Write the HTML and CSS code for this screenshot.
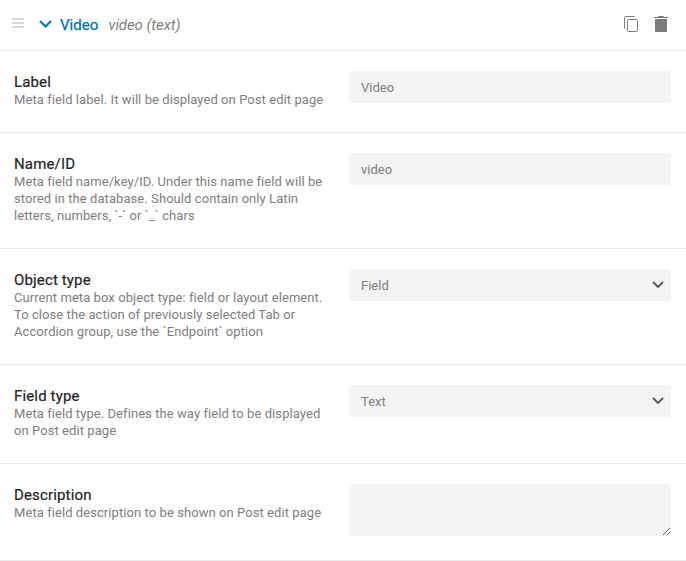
FILE: index.html
```html
<!DOCTYPE html>
<html lang="en">
<head>
<meta charset="utf-8">
<title>Video</title>
<link rel="stylesheet" href="styles.css">
</head>
<body>
<header class="head">
  <svg class="drag" width="12" height="10" viewBox="0 0 12 10"><path d="M0 0h12v2H0zM0 4h12v2H0zM0 8h12v2H0z" fill="#d9d9d9"/></svg>
  <svg class="chev" width="13" height="8" viewBox="0 0 13 8"><path d="M1 1l5.500 5.500L12 1" fill="none" stroke="#0073aa" stroke-width="2"/></svg>
  <span class="title">Video</span>
  <span class="sub">video (text)</span>
  <span class="actions">
    <svg width="14" height="16" viewBox="0 0 14 16"><path fill="none" stroke="#7b7b7b" d="M10.500.5H1.500q-1 0-1 1V12.500"/><rect x="3.500" y="3.500" width="10" height="12" rx="1" fill="none" stroke="#7b7b7b"/></svg>
    <svg width="14" height="16" viewBox="0 0 14 16"><path fill="#7b7b7b" d="M4.500 0h5l.5 1h4v1H0V1h4zM1 3h12v12q0 1-1 1H2q-1 0-1-1z"/></svg>
  </span>
</header>
<section class="row">
  <div class="info"><h3>Label</h3><p>Meta field label. It will be displayed on Post edit page</p></div>
  <div class="control"><input class="field" type="text" value="Video"></div>
</section>
<section class="row">
  <div class="info"><h3>Name/ID</h3><p>Meta field name/key/ID. Under this name field will be stored in the database. Should contain only Latin letters, numbers, `-` or `_` chars</p></div>
  <div class="control"><input class="field" type="text" value="video"></div>
</section>
<section class="row">
  <div class="info"><h3>Object type</h3><p>Current meta box object type: field or layout element. To close the action of previously selected Tab or Accordion group, use the `Endpoint` option</p></div>
  <div class="control"><div class="field select">Field<svg width="12" height="8" viewBox="0 0 12 8"><path d="M1 1l5 5 5-5" fill="none" stroke="#555" stroke-width="1.800"/></svg></div></div>
</section>
<section class="row">
  <div class="info"><h3>Field type</h3><p>Meta field type. Defines the way field to be displayed on Post edit page</p></div>
  <div class="control"><div class="field select">Text<svg width="12" height="8" viewBox="0 0 12 8"><path d="M1 1l5 5 5-5" fill="none" stroke="#555" stroke-width="1.800"/></svg></div></div>
</section>
<section class="row">
  <div class="info"><h3>Description</h3><p>Meta field description to be shown on Post edit page</p></div>
  <div class="control"><textarea class="field area"></textarea></div>
</section>
</body>
</html>
```
FILE: styles.css
```css
* { box-sizing: border-box; }
html, body { margin: 0; padding: 0; background: #fff; }
body { font-family: Roboto, sans-serif; overflow: hidden; }
.head {
  height: 51px;
  display: flex;
  align-items: center;
  padding: 0 18px 2px 12px;
  border-bottom: 1px solid #ececec;
}
.drag { margin-right: 15px; margin-bottom: 2px; }
.chev { margin-right: 8px; }
.title { margin: 2px 10px 0 0; font-size: 15px; font-weight: 400; letter-spacing: 0.05px; color: #0073aa; -webkit-text-stroke: 0.25px #0073aa; }
.sub { margin-top: 2px; font-size: 15px; font-style: italic; letter-spacing: -0.08px; color: #7e7e7e; }
.actions { margin-left: auto; display: flex; gap: 16px; margin-bottom: 1px; }
.row {
  display: flex;
  justify-content: space-between;
  padding: 20px 15px 20px 14px;
  border-bottom: 1px solid #ececec;
}
.info { width: 316px; }
h3 { margin: 2px 0 0; font-size: 15px; line-height: 18px; font-weight: 400; letter-spacing: 0.15px; color: #1f2429; -webkit-text-stroke: 0.2px #1f2429; }
p { margin: 0 0 4px; font-size: 13px; line-height: 17px; letter-spacing: 0.07px; color: #7e7e7e; }
.control { width: 322px; }
.field {
  display: block;
  width: 100%;
  height: 32px;
  padding: 0 12px;
  border: 0;
  border-radius: 4px;
  background: #f3f3f3;
  font-family: Roboto, sans-serif;
  font-size: 13px;
  color: #7e7e7e;
}
.select { display: flex; align-items: center; justify-content: space-between; padding-right: 7px; }
.area { height: 52px; margin-bottom: 4px; padding: 8px 12px; resize: vertical; }
```
